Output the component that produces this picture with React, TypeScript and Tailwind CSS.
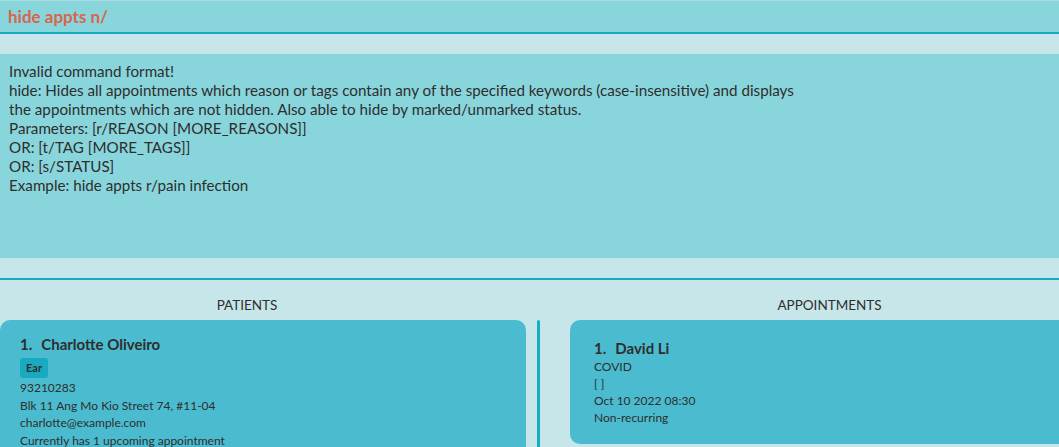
const App = () => {
  return (
    <div
      className="w-full h-[447px] overflow-hidden bg-[#c6e6e9] text-[#2e2e2e]"
      style={{ fontFamily: "Lato, 'Open Sans', sans-serif" }}
    >
      {/* command box */}
      <div className="h-[34px] border-t border-[#a9dde2] border-b-2 border-b-[#14adc0] bg-[#89d5dc] px-2 flex items-center">
        <span className="text-[17px] font-bold text-[#d8654c]">hide appts n/</span>
      </div>

      <div className="h-[20px]" />

      {/* result box */}
      <div className="h-[204px] bg-[#89d5dc] px-[9px] pt-[8px] text-[15.2px] leading-[19px]">
        <div>Invalid command format!</div>
        <div>
          hide: Hides all appointments which reason or tags contain any of the specified keywords (case-insensitive) and displays
        </div>
        <div>the appointments which are not hidden. Also able to hide by marked/unmarked status.</div>
        <div>Parameters: [r/REASON [MORE_REASONS]]</div>
        <div>OR: [t/TAG [MORE_TAGS]]</div>
        <div>OR: [s/STATUS]</div>
        <div>Example: hide appts r/pain infection</div>
      </div>

      <div className="h-[20px]" />
      <div className="h-[2px] bg-[#14adc0]" />

      {/* lists */}
      <div className="flex">
        <div className="w-[526px] shrink-0 flex flex-col">
          <div className="h-[40px] flex items-center justify-center pr-[32px] pt-[10px] text-[13.5px]">PATIENTS</div>
          <div className="rounded-[10px] bg-[#4bbccf] pl-[20px] pt-[14px] h-[160px]">
            <div className="flex text-[15px] font-bold leading-[20px]">
              <span>1.</span>
              <span className="ml-[9px]">Charlotte Oliveiro</span>
            </div>
            <div className="mt-[3px] inline-block rounded-[3px] bg-[#18aabf] px-[6px] py-[2px] text-[11px] font-bold leading-[16px]">
              Ear
            </div>
            <div className="text-[12px] leading-[17.5px] mt-[1px]">
              <div>93210283</div>
              <div>Blk 11 Ang Mo Kio Street 74, #11-04</div>
              <div>charlotte@example.com</div>
              <div>Currently has 1 upcoming appointment</div>
            </div>
          </div>
        </div>

        <div className="ml-[11px] mt-[40px] w-[3px] h-[140px] rounded-t-full bg-[#16aec1] shrink-0" />

        <div className="ml-[30px] flex-1 flex flex-col">
          <div className="h-[40px] flex items-center justify-center pl-[30px] pt-[10px] text-[13.5px]">APPOINTMENTS</div>
          <div className="h-[124px] rounded-l-[10px] bg-[#4bbccf] pl-[24px] pt-[18px] text-[12px] leading-[17px]">
            <div className="flex text-[15px] font-bold leading-[20px]">
              <span>1.</span>
              <span className="ml-[9px]">David Li</span>
            </div>
            <div>COVID</div>
            <div>[ ]</div>
            <div>Oct 10 2022 08:30</div>
            <div>Non-recurring</div>
          </div>
        </div>
      </div>
    </div>
  );
};

export default App;
